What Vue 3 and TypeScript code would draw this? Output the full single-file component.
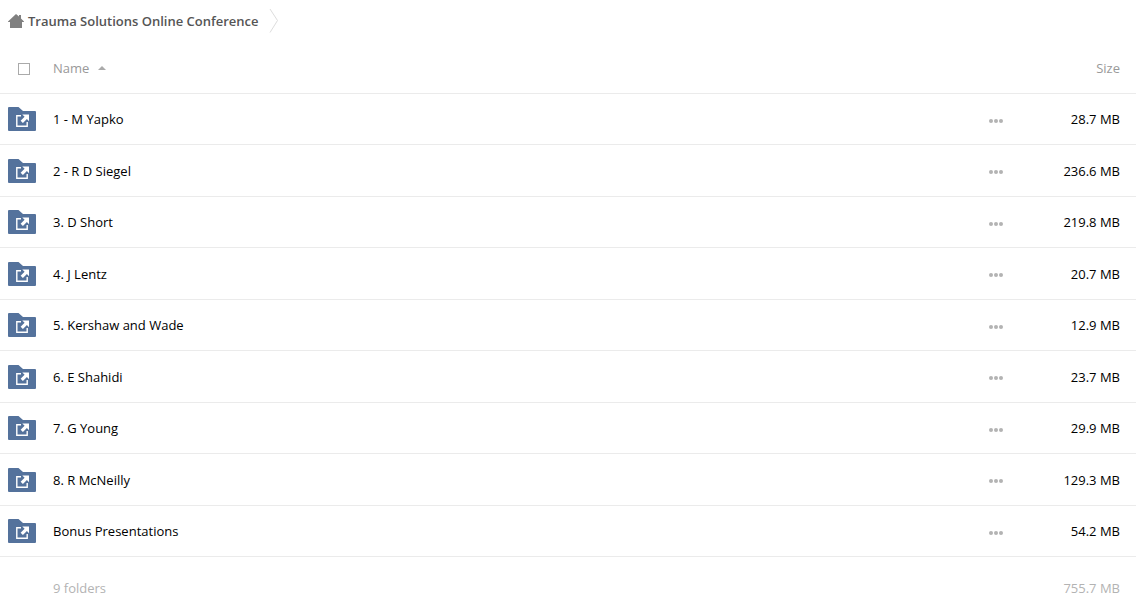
<script setup lang="ts">
import { ref } from 'vue'

interface Folder {
  name: string
  size: string
}

const folders: Folder[] = [
  { name: '1 - M Yapko', size: '28.7 MB' },
  { name: '2 - R D Siegel', size: '236.6 MB' },
  { name: '3. D Short', size: '219.8 MB' },
  { name: '4. J Lentz', size: '20.7 MB' },
  { name: '5. Kershaw and Wade', size: '12.9 MB' },
  { name: '6. E Shahidi', size: '23.7 MB' },
  { name: '7. G Young', size: '29.9 MB' },
  { name: '8. R McNeilly', size: '129.3 MB' },
  { name: 'Bonus Presentations', size: '54.2 MB' },
]

const allSelected = ref(false)
</script>

<template>
  <main class="files">
    <nav class="crumbs" aria-label="Breadcrumb">
      <a class="crumb" href="#">
        <svg class="home" width="16" height="14" viewBox="0 0 16 14" aria-hidden="true">
          <path d="M8 0 L11 2.6 V1 H13 V4.4 L16 7.4 V8 H14 V14 H2 V8 H0 V7.4 Z" />
        </svg>
        <span>Trauma Solutions Online Conference</span>
      </a>
      <svg class="chevron" width="10" height="26" viewBox="0 0 10 26" aria-hidden="true">
        <path d="M1 1 L8.5 12.5 L1 24.5" />
      </svg>
    </nav>

    <table class="list">
      <thead>
        <tr>
          <th class="pick" scope="col">
            <input v-model="allSelected" class="check" type="checkbox" aria-label="Select all" />
          </th>
          <th class="name" scope="col" aria-sort="ascending">
            <button class="sort" type="button">
              Name
              <svg width="8" height="4" viewBox="0 0 8 4" aria-hidden="true">
                <path d="M0 4 L4 0 L8 4 Z" />
              </svg>
            </button>
          </th>
          <th class="actions" scope="col" aria-label="Actions"></th>
          <th class="size" scope="col"><button class="sort" type="button">Size</button></th>
        </tr>
      </thead>
      <tbody>
        <tr v-for="folder in folders" :key="folder.name">
          <td class="pick">
            <svg class="folder" width="28" height="24" viewBox="0 0 28 24" aria-hidden="true">
              <path
                class="shape"
                d="M1 0 H10.5 L15 4 H27 Q28 4 28 5 V23 Q28 24 27 24 H1 Q0 24 0 23 V1 Q0 0 1 0 Z"
              />
              <path class="frame" d="M13 8.8 H8.8 V19.2 H19.2 V15" />
              <path class="arrow" d="M14.3 7.5 H21 V14.2 L18.9 12.1 L14.9 16.1 L12.6 13.8 L16.6 9.8 Z" />
            </svg>
          </td>
          <td class="name"><a href="#">{{ folder.name }}</a></td>
          <td class="actions">
            <button class="more" type="button" :aria-label="`More actions for ${folder.name}`">
              <svg width="14" height="4" viewBox="0 0 14 4" aria-hidden="true">
                <circle cx="2" cy="2" r="2" />
                <circle cx="7" cy="2" r="2" />
                <circle cx="12" cy="2" r="2" />
              </svg>
            </button>
          </td>
          <td class="size">{{ folder.size }}</td>
        </tr>
      </tbody>
      <tfoot>
        <tr>
          <td class="pick"></td>
          <td class="name">{{ folders.length }} folders</td>
          <td class="actions"></td>
          <td class="size">755.7 MB</td>
        </tr>
      </tfoot>
    </table>
  </main>
</template>

<style>
body {
  margin: 0;
  background: #fff;
}
</style>

<style scoped>
.files {
  font-family: 'Open Sans', 'Noto Sans', sans-serif;
  font-size: 13px;
  line-height: 24px;
  color: #000;
}

svg {
  display: block;
}

a {
  color: inherit;
  text-decoration: none;
}

button {
  padding: 0;
  border: 0;
  background: none;
  color: inherit;
  font: inherit;
  cursor: pointer;
}

.crumbs {
  display: flex;
  align-items: center;
  gap: 10px;
  height: 42px;
  padding-left: 8px;
}

.crumb {
  display: flex;
  align-items: center;
  gap: 4px;
  color: #555;
  font-weight: 600;
}

.home {
  fill: #808080;
}

.chevron {
  fill: none;
  stroke: #ddd;
}

.list {
  width: 100%;
  border-collapse: separate;
  border-spacing: 0;
  table-layout: fixed;
}

th,
td {
  padding: 13px 0;
  text-align: left;
  vertical-align: top;
  font-weight: 400;
}

thead th,
tbody td {
  border-bottom: 1px solid #ebebeb;
}

tbody tr:nth-child(even) td {
  padding-top: 14px;
}

thead th {
  height: 24px;
  padding: 14px 0 13px;
  color: #999;
}

.pick {
  width: 45px;
  padding-left: 8px;
}

thead .pick {
  padding-left: 18px;
  width: 35px;
}

.actions {
  width: 36px;
}

.size {
  width: 103px;
  padding-right: 16px;
  text-align: right;
}

thead .size {
  padding-right: 16px;
}

.check {
  display: block;
  box-sizing: border-box;
  width: 12px;
  height: 12px;
  margin: 7px 0 0;
  border: 1px solid #aaa;
  background: #fff;
  appearance: none;
}

.check:checked {
  background: #54729c;
}

.sort {
  display: inline-flex;
  align-items: center;
  gap: 9px;
  vertical-align: top;
}

.sort svg {
  fill: #aaa;
}

.shape {
  fill: #54729c;
}

.frame {
  fill: none;
  stroke: #fff;
  stroke-width: 1.4;
}

.arrow {
  fill: #fff;
}

tbody .actions,
tbody tr:nth-child(even) .actions {
  padding-top: 17px;
  padding-bottom: 0;
}

.more {
  display: flex;
  align-items: center;
  height: 20px;
  padding: 0 8px;
}

.more svg {
  fill: #b3b3b3;
}

tfoot td {
  padding: 19px 0 11px;
  color: #b3b3b3;
}

tfoot .size {
  padding-right: 16px;
}
</style>
